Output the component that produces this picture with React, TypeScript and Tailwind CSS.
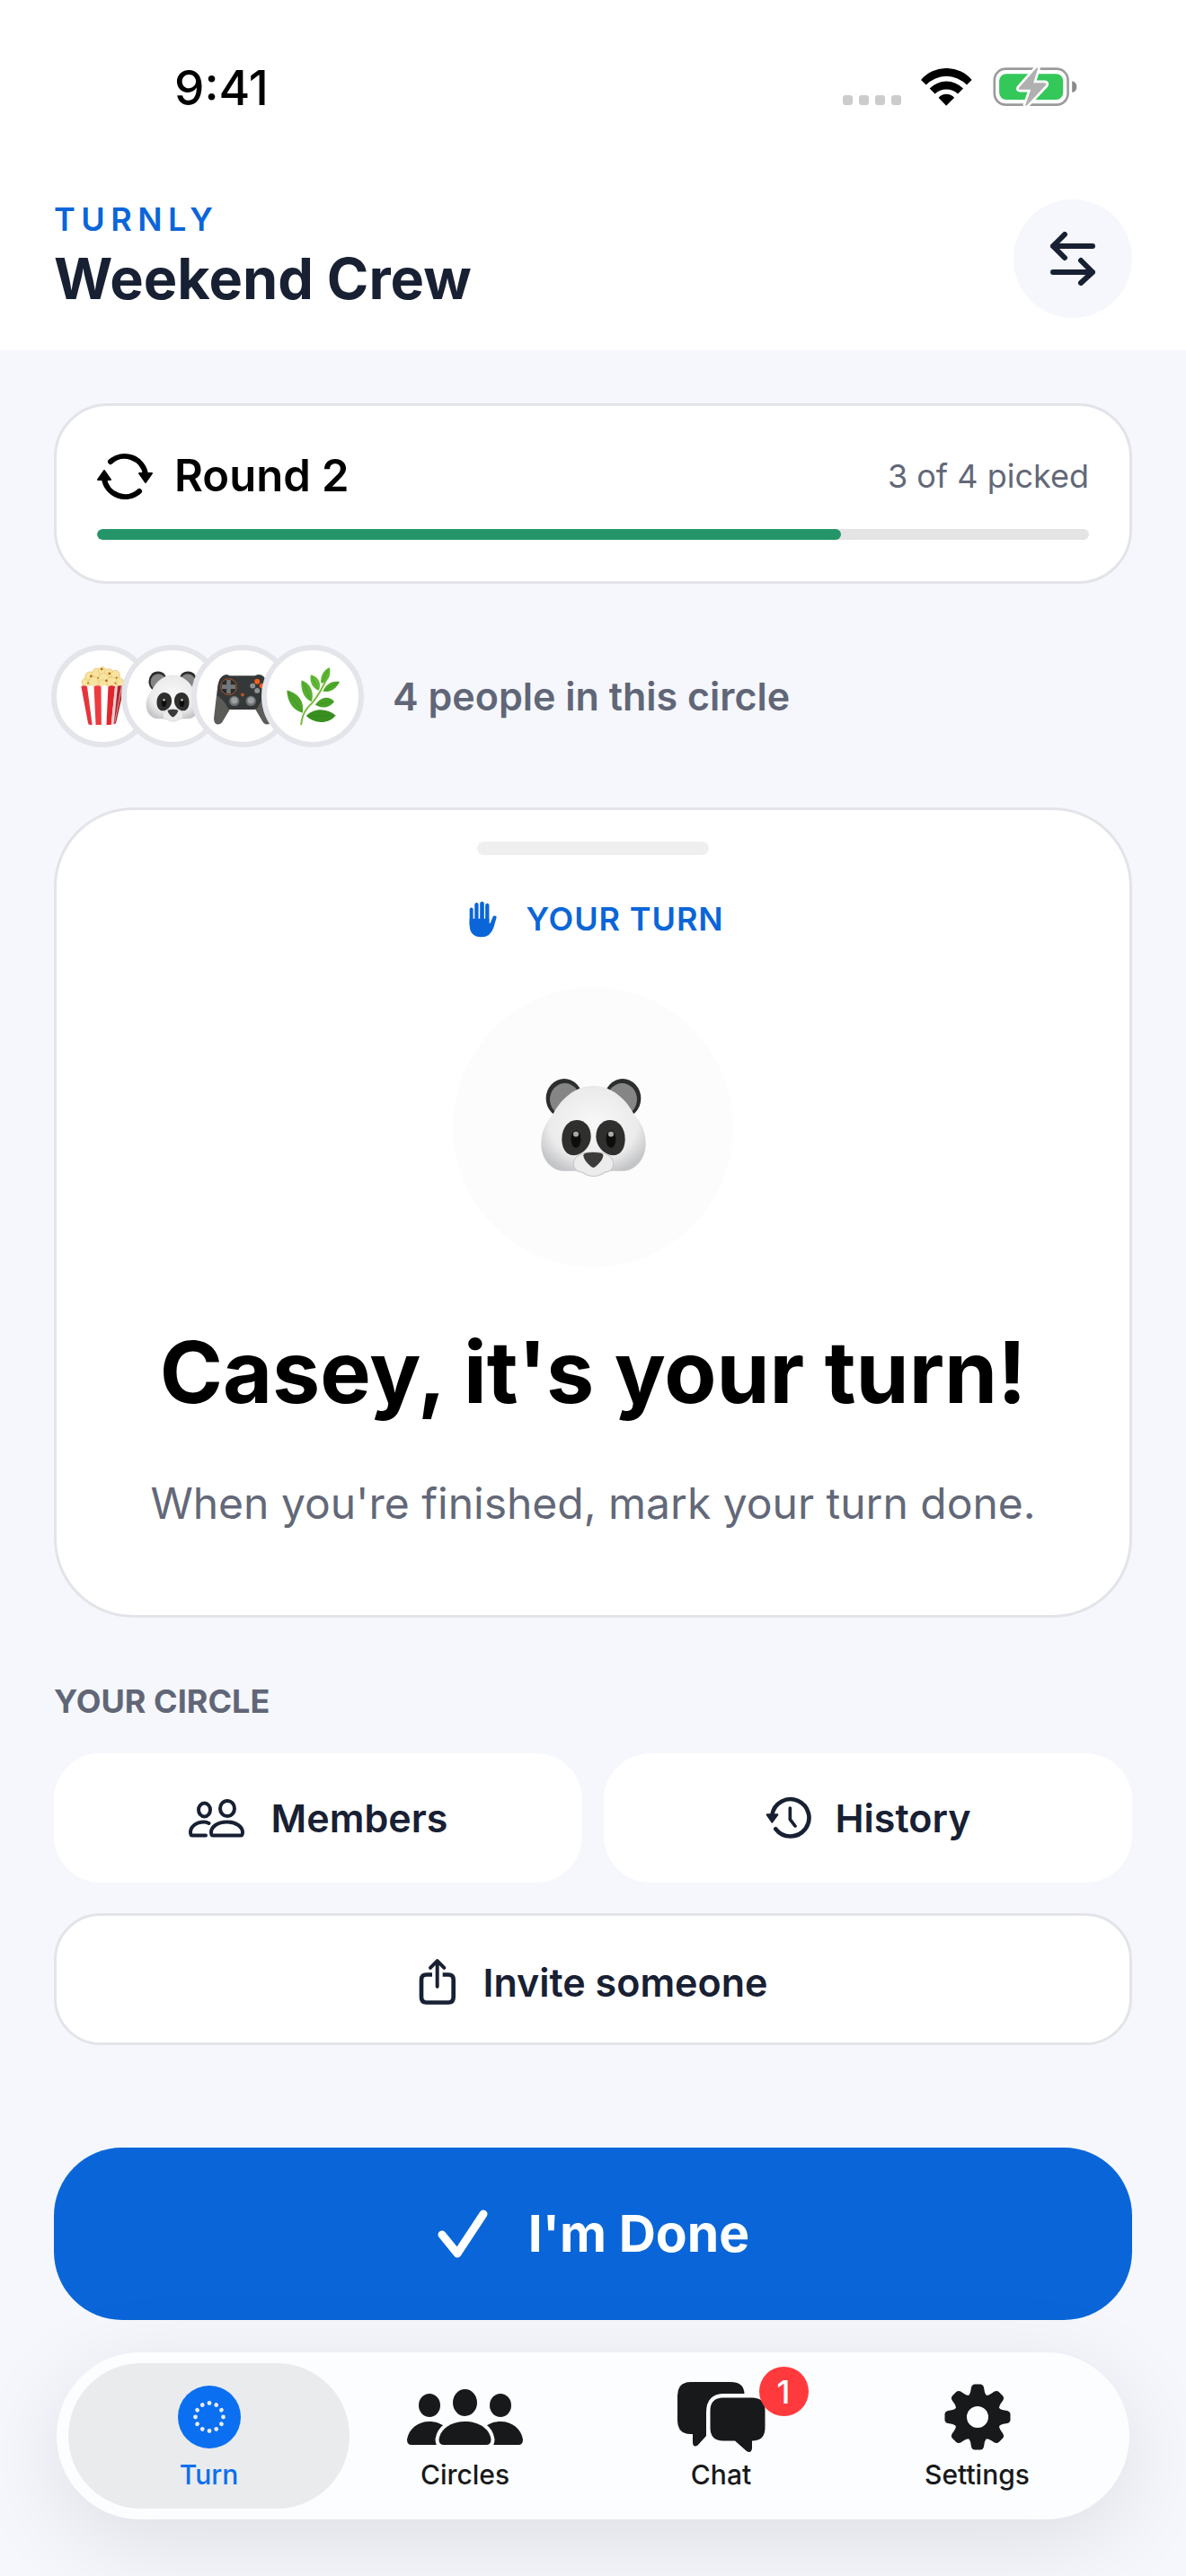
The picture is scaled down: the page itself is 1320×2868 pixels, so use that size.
import React from 'react';

const TickDots = () => (
  <div className="flex gap-[7px] self-end pb-[3px]">
    {[0, 1, 2, 3].map((dot) => (
      <span key={dot} className="h-[11px] w-[11px] rounded-[3px] bg-[#cccccc]" />
    ))}
  </div>
);

const WifiIcon = () => (
  <svg viewBox="315 45 172 127" className="h-[42px] w-[57px]" aria-hidden="true">
    <path d="M315 84A113 113 0 0 1 486 84L469 101A95 95 0 0 0 332 101Z" />
    <path d="M344 113A79 79 0 0 1 457 113L439 131A57 57 0 0 0 362 131Z" />
    <path d="M374 144A35 35 0 0 1 427 144L400 171Z" />
  </svg>
);

const BatteryIcon = () => (
  <svg viewBox="552 38 284 142" className="h-[47px] w-[95px]" aria-hidden="true">
    <rect x="559" y="49" width="247" height="121" rx="38" fill="none" stroke="#9b9b9b" strokeWidth="8" />
    <rect x="575" y="66" width="215" height="87" rx="24" fill="#34c759" />
    <path d="M820 90A20 20 0 0 1 820 129Z" fill="#8a8a8a" />
    <path
      d="M700 46L641 113Q638 119 645 119H681L663 171Q665 175 669 171L732 104Q736 96 728 96H690L705 48Q705 43 700 46Z"
      fill="#b0b0b0"
      stroke="#ffffff"
      strokeWidth="16"
      strokeLinejoin="round"
      paintOrder="stroke"
    />
  </svg>
);

const SwapIcon = () => (
  <svg viewBox="0 0 50 60" className="h-[60px] w-[50px]" fill="none" stroke="currentColor" strokeWidth="6" strokeLinecap="round" strokeLinejoin="round" aria-hidden="true">
    <path d="M47 16H3M16 3L3 16L16 29" />
    <path d="M3 45H47M34 32L47 45L34 57" />
  </svg>
);

const RoundIcon = () => (
  <svg viewBox="0 0 62 53" className="h-[53px] w-[62px]" aria-hidden="true">
    <path d="M15 10A23.5 23.5 0 0 1 54 24" fill="none" stroke="currentColor" strokeWidth="6" strokeLinecap="round" />
    <path d="M47 23H61L54 33Z" fill="currentColor" stroke="currentColor" strokeWidth="2" strokeLinejoin="round" />
    <g transform="rotate(180 31 26.5)">
      <path d="M15 10A23.5 23.5 0 0 1 54 24" fill="none" stroke="currentColor" strokeWidth="6" strokeLinecap="round" />
      <path d="M47 23H61L54 33Z" fill="currentColor" stroke="currentColor" strokeWidth="2" strokeLinejoin="round" />
    </g>
  </svg>
);

const HandIcon = () => (
  <svg viewBox="373 340 94 116" preserveAspectRatio="none" className="h-[41px] w-[31px]" fill="currentColor" aria-hidden="true">
    <rect x="375" y="361" width="12" height="60" rx="6" />
    <rect x="392" y="346" width="13" height="70" rx="6.5" />
    <rect x="410" y="342" width="14" height="70" rx="7" />
    <rect x="428" y="348" width="13" height="70" rx="6.5" />
    <path d="M375 396Q381 402 387 396H441V410Q444 412 446 408L453 391Q458 384 465 389Q467 391 465 395L456 424Q445 454 415 454Q375 454 375 415Z" />
  </svg>
);

const MembersIcon = () => (
  <svg viewBox="0 0 62 43" className="h-[43px] w-[62px]" fill="none" stroke="currentColor" strokeWidth="4" strokeLinecap="round" strokeLinejoin="round" aria-hidden="true">
    <ellipse cx="17.5" cy="12" rx="6.5" ry="7.5" />
    <ellipse cx="43" cy="10.5" rx="8" ry="8.5" />
    <path d="M27 40.500H58Q60 40.500 60 37C60 31 53 25.500 42.500 25.500S25 31 25 37Q25 40.500 27 40.500Z" />
    <path d="M19 40.500H4Q2 40.500 2 37C2 31 8 25.500 17 25.500Q20 25.500 22.500 27" />
  </svg>
);

const HistoryIcon = () => (
  <svg viewBox="1230 30 156 144" className="h-[48px] w-[52px]" fill="none" stroke="currentColor" strokeLinecap="round" strokeLinejoin="round" aria-hidden="true">
    <path d="M1252 92A62 62 0 1 1 1264 139" strokeWidth="14" />
    <path d="M1312 69V107L1329 129" strokeWidth="11" />
    <path d="M1235 91H1270L1252 116Z" fill="currentColor" strokeWidth="6" />
  </svg>
);

const ShareIcon = () => (
  <svg viewBox="82 570 126 158" className="h-[53px] w-[42px]" fill="none" stroke="currentColor" aria-hidden="true">
    <path d="M144 665V580M121 602L144 579L167 602" strokeWidth="12" strokeLinecap="round" strokeLinejoin="round" />
    <path d="M127 625H108Q91 625 91 642V700Q91 718 108 718H181Q198 718 198 700V642Q198 625 181 625H162" strokeWidth="14" />
  </svg>
);

const CheckIcon = () => (
  <svg viewBox="0 0 58 56" className="h-[56px] w-[58px]" fill="none" stroke="currentColor" strokeWidth="9" strokeLinecap="round" strokeLinejoin="round" aria-hidden="true">
    <path d="M6 29L23 50L52 6" />
  </svg>
);

const Popcorn = () => (
  <svg viewBox="0 0 160 200" className="h-[66px] w-[53px]" aria-hidden="true">
    <g fill="#f8e3a0" stroke="#e3bf63" strokeWidth="2">
      <circle cx="24" cy="54" r="15" />
      <circle cx="36" cy="34" r="16" />
      <circle cx="60" cy="22" r="16" />
      <circle cx="78" cy="15" r="13" />
      <circle cx="100" cy="23" r="15" />
      <circle cx="122" cy="28" r="15" />
      <circle cx="134" cy="54" r="16" />
      <circle cx="50" cy="52" r="18" />
      <circle cx="82" cy="42" r="19" />
      <circle cx="110" cy="54" r="18" />
      <circle cx="80" cy="60" r="15" />
    </g>
    <g fill="#b4671b">
      <circle cx="40" cy="33" r="4" />
      <circle cx="76" cy="9" r="4" />
      <circle cx="102" cy="24" r="4" />
      <circle cx="64" cy="39" r="3" />
      <circle cx="92" cy="48" r="4" />
      <circle cx="126" cy="38" r="3" />
      <circle cx="30" cy="56" r="3" />
      <circle cx="122" cy="56" r="3" />
    </g>
    <path d="M7 68Q15 61 26 68Q38 61 50 68Q62 61 74 68Q86 61 98 68Q110 61 122 68Q136 60 153 64L124 192Q122 197 116 197H36Q31 197 30 191Z" fill="#ffffff" />
    <path d="M7 68Q15 61 27 68L44 197H36Q31 197 30 191Z" fill="#e7343c" />
    <path d="M50 68Q62 61 74 68L75 197H56Z" fill="#ee3a41" />
    <path d="M98 68Q110 61 121 68L108 197H92Z" fill="#e3262e" />
    <path d="M121 68L130 65L117 195L108 197Z" fill="#e6cfcf" />
    <path d="M130 65L153 64L124 192L117 195Z" fill="#b3202a" />
    <path d="M142 64L146 64L121 190L119 190Z" fill="#d8a9a9" />
  </svg>
);

const Panda = ({ className }: { className: string }) => {
  const id = React.useId();

  return (
    <svg viewBox="0 0 357 310" preserveAspectRatio="none" className={className} aria-hidden="true">
      <defs>
        <radialGradient id={id} cx="0.5" cy="0.45" r="0.6">
          <stop offset="0" stopColor="#f8f8f8" />
          <stop offset="0.7" stopColor="#ebebeb" />
          <stop offset="1" stopColor="#c4c5c8" />
        </radialGradient>
      </defs>
      <circle cx="81" cy="64" r="61" fill="#2b2d2e" />
      <circle cx="276" cy="64" r="61" fill="#2b2d2e" />
      <circle cx="83" cy="67" r="50" fill="#858585" />
      <circle cx="274" cy="67" r="50" fill="#858585" />
      <path d="M178 25C230 25 280 55 312 110C338 140 353 165 353 205C353 255 315 290 275 290H82C40 290 4 255 4 205C4 165 20 140 45 110C78 55 126 25 178 25Z" fill={`url(#${id})`} />
      {['', 'translate(357 0) scale(-1 1)'].map((flip) => (
        <g key={flip} transform={flip || undefined}>
          <path d="M122 131C150 131 170 152 170 182C170 215 140 241 112 241C88 241 73 220 73 190C73 155 95 131 122 131Z" fill="#2f2f2e" />
          <ellipse cx="120" cy="191" rx="16" ry="27" fill="#0d0d0d" />
          <ellipse cx="120" cy="175" rx="9" ry="8" fill="#a9a9a9" />
        </g>
      ))}
      <path d="M178 231C225 231 245 245 245 268C245 285 232 292 216 294Q198 306 178 306Q160 306 142 294C122 292 112 285 112 268C112 245 135 231 178 231Z" fill="#ececec" stroke="#c6c6c6" strokeWidth="3" />
      <path d="M145 241Q145 232 178 232Q211 232 211 241Q211 256 186 276Q178 282 170 276Q145 256 145 241Z" fill="#3c3b39" />
    </svg>
  );
};

const Gamepad = () => (
  <svg viewBox="0 -20 200 196" className="h-[65px] w-[66px]" aria-hidden="true">
    <path d="M38 6Q48 2 56 8H142Q152 2 164 6Q178 12 182 40L197 152Q196 172 182 172Q172 172 166 160L140 116H60L34 160Q28 172 17 172Q4 172 3 152L16 40Q22 12 38 6Z" fill="#5b5b57" />
    <path d="M38 6Q48 2 56 8H142Q152 2 164 6Q178 12 182 40L184 74Q160 92 150 116Q146 122 138 122H62Q54 122 50 116Q40 92 14 74L18 40Q22 12 38 6Z" fill="#353838" />
    <circle cx="53" cy="45" r="27" fill="#2a2c2c" stroke="#b2562a" strokeWidth="3" />
    <path d="M46 22H60V38H76V52H60V68H46V52H30V38H46Z" fill="#74787a" />
    <circle cx="149" cy="27" r="9" fill="#f4601c" />
    <circle cx="166" cy="42" r="9" fill="#f4601c" />
    <circle cx="134" cy="42" r="9" fill="#8f9294" />
    <circle cx="149" cy="58" r="9" fill="#8f9294" />
    <circle cx="100" cy="72" r="6" fill="#b2562a" />
    <circle cx="72" cy="93" r="17" fill="#6e7274" />
    <circle cx="72" cy="91" r="11" fill="#9da1a3" />
    <circle cx="128" cy="93" r="17" fill="#6e7274" />
    <circle cx="128" cy="91" r="11" fill="#9da1a3" />
  </svg>
);

const Herb = () => (
  <svg viewBox="0 0 190 200" className="h-[67px] w-[63px]" aria-hidden="true">
    <path d="M55 193Q58 160 76 138Q112 104 138 45" fill="none" stroke="#7cb93c" strokeWidth="6" strokeLinecap="round" />
    <path d="M7 79C40 88 66 110 60 155C26 146 8 116 7 79Z" fill="#4ea52b" />
    <path d="M56 46C84 54 100 84 90 117C66 110 52 78 56 46Z" fill="#58b031" />
    <path d="M87 27C114 34 124 56 114 80C92 72 82 50 87 27Z" fill="#62b936" />
    <path d="M150 2C156 26 148 50 122 56C118 34 128 12 150 2Z" fill="#5cb733" />
    <path d="M184 50C172 76 150 88 128 82C138 58 158 46 184 50Z" fill="#4eaa2b" />
    <path d="M166 117C148 140 122 140 102 128C118 104 146 94 166 117Z" fill="#49a228" />
    <path d="M171 163C144 196 96 190 72 165C96 138 140 138 171 163Z" fill="#388e1f" />
    <g fill="none" stroke="#2f7d19" strokeWidth="2" opacity="0.6">
      <path d="M12 86L56 148M60 52L86 108M92 34L110 74M146 10L126 50M178 54L134 78M158 117L108 127M162 165L80 165" />
    </g>
  </svg>
);

const TurnIcon = () => (
  <svg viewBox="0 0 70 70" className="h-[70px] w-[70px]" aria-hidden="true">
    <circle cx="35" cy="35" r="35" fill="#0a6ff0" />
    {Array.from({ length: 12 }, (_, i) => (
      <circle key={i} cx="35" cy="19.500" r="2.400" fill="#e9ebed" transform={`rotate(${i * 30} 35 35)`} />
    ))}
  </svg>
);

const CirclesIcon = () => (
  <svg viewBox="0 0 129 62" className="h-[62px] w-[129px]" fill="currentColor" aria-hidden="true">
    <ellipse cx="25" cy="18" rx="12" ry="13" />
    <ellipse cx="104" cy="18" rx="12" ry="13" />
    <ellipse cx="64.500" cy="15" rx="13.500" ry="15" />
    <path d="M5 62Q0 62 0 56C2 44 12 36 25 36C38 36 50 44 50 62Z" />
    <path d="M124 62Q129 62 129 56C127 44 117 36 104 36C91 36 79 44 79 62Z" />
    <path d="M41 62Q35.500 62 35.500 56C37 44 49 36 64.500 36S92 44 93.500 56Q93.500 62 88 62Z" stroke="#fbfdff" strokeWidth="8" paintOrder="stroke" />
  </svg>
);

const ChatIcon = () => (
  <svg viewBox="0 0 98 78" className="h-[78px] w-[98px]" fill="currentColor" aria-hidden="true">
    <path d="M15 0H59Q74 0 74.500 13H52Q32 13 32 34V60L23 70Q18 74 17 68V58H15Q0 58 0 43V15Q0 0 15 0Z" />
    <path d="M51 17.500H83Q97.500 17.500 97.500 32V51Q97.500 65.500 83 65.500V74Q82 80 77 77L64 65.500H51Q36.500 65.500 36.500 51V32Q36.500 17.500 51 17.500Z" />
  </svg>
);

const SettingsIcon = () => (
  <svg viewBox="-37 -37 74 74" className="h-[74px] w-[74px]" fill="currentColor" aria-hidden="true">
    <circle r="19" fill="none" stroke="currentColor" strokeWidth="14" />
    {Array.from({ length: 8 }, (_, i) => (
      <path key={i} d="M-12 -22Q-8 -25 -7.500 -30L-7 -33Q-6 -36.500 -3 -36.500H3Q6 -36.500 7 -33L7.500 -30Q8 -25 12 -22Z" transform={`rotate(${i * 45})`} />
    ))}
  </svg>
);

const members = [
  { name: 'Popcorn', icon: <Popcorn /> },
  { name: 'Casey', icon: <Panda className="h-[57px] w-[61px]" /> },
  { name: 'Gamepad', icon: <Gamepad /> },
  { name: 'Herb', icon: <Herb /> },
];

const tabs = [
  { name: 'Turn', icon: <TurnIcon />, active: true },
  { name: 'Circles', icon: <CirclesIcon /> },
  { name: 'Chat', icon: <ChatIcon />, badge: 1 },
  { name: 'Settings', icon: <SettingsIcon /> },
];

const Header = () => (
  <header className="bg-white">
    <div className="flex h-[126px] items-end justify-between pr-[121px] pb-[6px] pl-[194px]">
      <span className="text-[53px] leading-[44px] font-medium text-black">9:41</span>
      <div className="flex items-center gap-[22px]">
        <TickDots />
        <WifiIcon />
        <BatteryIcon />
      </div>
    </div>
    <div className="flex items-center justify-between px-[60px] pt-24 pb-9">
      <div>
        <p className="text-[36px] leading-[44px] font-semibold tracking-[0.18em] text-[#0a66d8]">TURNLY</p>
        <h1 className="text-[63px] leading-[88px] font-bold text-[#182033]">Weekend Crew</h1>
      </div>
      <button type="button" aria-label="Switch circle" className="flex h-[132px] w-[132px] items-center justify-center rounded-full bg-[#f5f7fc] text-[#182033]">
        <SwapIcon />
      </button>
    </div>
  </header>
);

const RoundCard = () => {
  const picked = 3;
  const total = 4;

  return (
    <section className="rounded-[60px] border-3 border-[#e3e4e9] bg-white px-[45px] pt-12 pb-[46px]">
      <div className="flex items-center justify-between">
        <h2 className="flex items-center gap-6 text-[49px] leading-[60px] font-semibold text-black">
          <RoundIcon />
          Round 2
        </h2>
        <span className="text-[36px] leading-[44px] text-[#636878]">3 of 4 picked</span>
      </div>
      <div role="progressbar" aria-label="Round progress" aria-valuenow={picked} aria-valuemax={total} className="mt-[29px] h-3 overflow-hidden rounded-full bg-[#e4e4e4]">
        <div className="h-full rounded-full bg-[#249568]" style={{ width: `${(picked / total) * 100}%` }} />
      </div>
    </section>
  );
};

const App = () => {
  return (
    <div className="flex min-h-screen flex-col bg-[#f5f7fc] font-['Inter','Liberation_Sans',sans-serif]">
      <Header />
      <main className="flex flex-col px-[60px] pt-[59px]">
        <RoundCard />

        <div className="mt-[68px] flex items-center gap-8">
          <ul className="-ml-[3px] flex -space-x-9">
            {members.map((member) => (
              <li key={member.name} aria-label={member.name} className="flex h-[114px] w-[114px] items-center justify-center rounded-full border-6 border-[#e4e5ea] bg-white">
                {member.icon}
              </li>
            ))}
          </ul>
          <span className="text-[43px] leading-[54px] font-semibold text-[#616677]">4 people in this circle</span>
        </div>

        <section className="mt-[67px] flex flex-col items-center rounded-[88px] border-3 border-[#e3e4e9] bg-white px-9 pt-[35px] pb-[94px]">
          <span className="h-[15px] w-[258px] rounded-full bg-[#efefef]" />
          <p className="mt-[49px] flex items-center gap-8 pl-2 text-[36px] leading-[44px] font-semibold tracking-wide text-[#0a66d8]">
            <HandIcon />
            YOUR TURN
          </p>
          <div className="mt-[54px] flex h-[312px] w-[312px] items-center justify-center rounded-full bg-[#fcfcfc]">
            <Panda className="h-[111px] w-[119px]" />
          </div>
          <h2 className="mt-[55px] text-center text-[95px] leading-[124px] font-bold text-black">Casey, it's your turn!</h2>
          <p className="mt-[54px] text-center text-[48px] leading-[60px] text-[#636878]">When you're finished, mark your turn done.</p>
        </section>

        <section className="mt-[71px]">
          <h3 className="text-[36px] leading-[44px] font-bold text-[#616677]">YOUR CIRCLE</h3>
          <div className="mt-9 grid grid-cols-2 gap-6 text-[43px] leading-[54px] font-semibold text-[#182033]">
            <button type="button" className="flex h-36 items-center justify-center gap-[30px] rounded-[52px] bg-white">
              <MembersIcon />
              Members
            </button>
            <button type="button" className="flex h-36 items-center justify-center gap-[26px] rounded-[52px] bg-white">
              <HistoryIcon />
              History
            </button>
            <button type="button" className="col-span-2 mt-2.5 flex h-[147px] items-center justify-center gap-[30px] rounded-[52px] border-3 border-[#e3e4e9] bg-white pt-1.5">
              <ShareIcon />
              Invite someone
            </button>
          </div>
        </section>

        <button type="button" className="mt-[114px] flex h-48 items-center justify-center gap-11 rounded-[76px] bg-[#0a66d8] text-[57px] leading-[72px] font-bold text-white">
          <CheckIcon />
          I'm Done
        </button>
      </main>

      <nav aria-label="Tabs" className="mx-[63px] mt-9 mb-[63px] grid grid-cols-4 rounded-full bg-[#fbfdff] px-[27px] py-3 shadow-[0_24px_100px_rgba(0,0,0,0.10)]">
        {tabs.map((tab) => (
          <a
            key={tab.name}
            href={`#${tab.name.toLowerCase()}`}
            aria-current={tab.active ? 'page' : undefined}
            className={`-mx-3.5 flex h-[162px] flex-col items-center rounded-full pt-5 ${tab.active ? 'bg-[#e9ebed] text-[#0a6ff0]' : 'text-[#18191b]'}`}
          >
            <span className="relative flex h-20 items-center">
              {tab.icon}
              {tab.badge && (
                <span className="absolute -top-4 -right-12 flex h-[55px] w-[55px] items-center justify-center rounded-full bg-[#ff3a3d] text-[36px] leading-none font-medium text-white">
                  {tab.badge}
                </span>
              )}
            </span>
            <span className="mt-1.5 text-[30px] leading-9 font-medium">{tab.name}</span>
          </a>
        ))}
      </nav>
    </div>
  );
};

export default App;
